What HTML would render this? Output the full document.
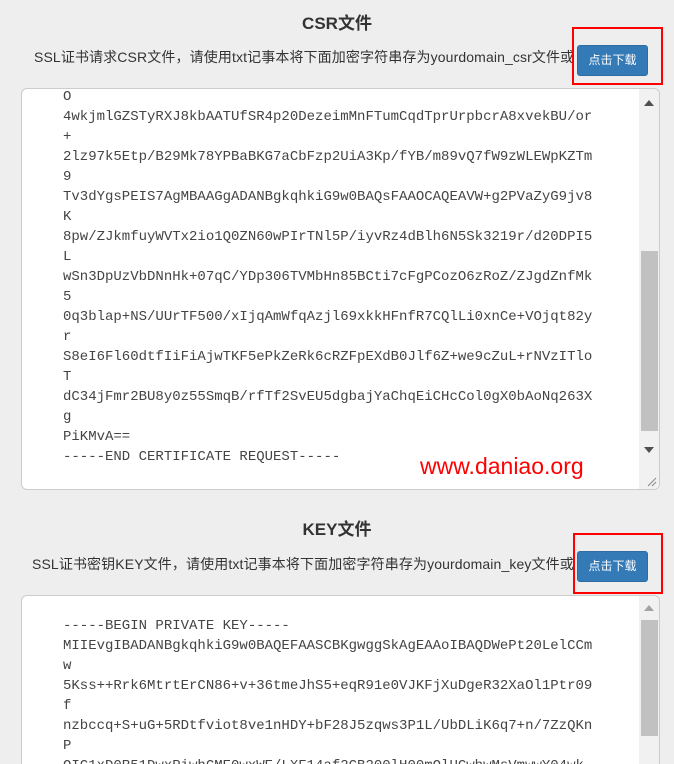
<!DOCTYPE html>
<html><head><meta charset="utf-8"><style>
html,body{margin:0;height:764px;overflow:hidden}
body{width:674px;background:#eeeeee;position:relative;font-family:"Liberation Sans","Noto Sans CJK SC",sans-serif;color:#333}
.t{position:absolute;left:0;width:674px;text-align:center;font-weight:bold;font-size:17px}
.d{position:absolute;left:34px;font-size:14px;white-space:nowrap;letter-spacing:0.12px}
.btn{position:absolute;left:577px;width:71px;height:31px;background:#337ab7;border:1px solid #2e6da4;border-radius:3px;box-sizing:border-box;color:#fff;font-size:12px;text-align:center;line-height:29px}
.red{position:absolute;border:2px solid #f00;box-sizing:border-box}
.ta{position:absolute;left:21px;width:639px;background:#fff;border:1px solid #ccc;border-radius:6px;box-sizing:border-box;overflow:hidden}
pre{position:absolute;left:41px;margin:0;font-family:"Liberation Mono",monospace;font-size:14px;line-height:20px;color:#444}
.sb{position:absolute;right:0;top:0;width:20px;bottom:0;background:#f1f1f1}
.th{position:absolute;left:2px;width:17px;background:#c1c1c1}
.au,.ad{position:absolute;left:5px;width:0;height:0;border-left:5px solid transparent;border-right:5px solid transparent}
.au{border-bottom:6px solid #505050}.ad{border-top:6px solid #505050}
</style></head><body>
<div class="t" style="top:9px">CSR文件</div>
<div class="d" style="top:47px">SSL证书请求CSR文件，请使用txt记事本将下面加密字符串存为yourdomain_csr文件或</div>
<div class="btn" style="top:45px">点击下载</div>
<div class="red" style="left:572px;top:27px;width:91px;height:58px"></div>
<div class="ta" style="top:88px;height:402px">
<pre style="top:-2px">O
4wkjmlGZSTyRXJ8kbAATUfSR4p20DezeimMnFTumCqdTprUrpbcrA8xvekBU/or
+
2lz97k5Etp/B29Mk78YPBaBKG7aCbFzp2UiA3Kp/fYB/m89vQ7fW9zWLEWpKZTm
9
Tv3dYgsPEIS7AgMBAAGgADANBgkqhkiG9w0BAQsFAAOCAQEAVW+g2PVaZyG9jv8
K
8pw/ZJkmfuyWVTx2io1Q0ZN60wPIrTNl5P/iyvRz4dBlh6N5Sk3219r/d20DPI5
L
wSn3DpUzVbDNnHk+07qC/YDp306TVMbHn85BCti7cFgPCozO6zRoZ/ZJgdZnfMk
5
0q3blap+NS/UUrTF500/xIjqAmWfqAzjl69xkkHFnfR7CQlLi0xnCe+VOjqt82y
r
S8eI6Fl60dtfIiFiAjwTKF5ePkZeRk6cRZFpEXdB0Jlf6Z+we9cZuL+rNVzITlo
T
dC34jFmr2BU8y0z55SmqB/rfTf2SvEU5dgbajYaChqEiCHcCol0gX0bAoNq263X
g
PiKMvA==
-----END CERTIFICATE REQUEST-----</pre>
<div class="sb"><div class="au" style="top:11px"></div><div class="th" style="top:162px;height:180px"></div><div class="ad" style="top:358px"></div></div>
<svg style="position:absolute;right:2px;bottom:2px" width="12" height="12"><path d="M11 3L3 11M11 7L7 11" stroke="#888" stroke-width="1"/></svg>
<div style="position:absolute;left:398px;top:364px;color:#f00;font-size:23px">www.daniao.org</div>
</div>
<div class="t" style="top:515px">KEY文件</div>
<div class="d" style="top:554px;left:32px">SSL证书密钥KEY文件，请使用txt记事本将下面加密字符串存为yourdomain_key文件或</div>
<div class="btn" style="top:551px">点击下载</div>
<div class="red" style="left:573px;top:533px;width:90px;height:61px"></div>
<div class="ta" style="top:595px;height:200px">
<pre style="top:20px">-----BEGIN PRIVATE KEY-----
MIIEvgIBADANBgkqhkiG9w0BAQEFAASCBKgwggSkAgEAAoIBAQDWePt20LelCCm
w
5Kss++Rrk6MtrtErCN86+v+36tmeJhS5+eqR91e0VJKFjXuDgeR32XaOl1Ptr09
f
nzbccq+S+uG+5RDtfviot8ve1nHDY+bF28J5zqws3P1L/UbDLiK6q7+n/7ZzQKn
P
OIC1xD0R51DwxPiwhCME0wxWE/LXF14af2CB200lH00mOlUCwbwMsVmwwY04wk</pre>
<div class="sb"><div class="au" style="top:9px;border-bottom-color:#a3a3a3"></div><div class="th" style="top:24px;height:116px"></div></div>
</div>
</body></html>
